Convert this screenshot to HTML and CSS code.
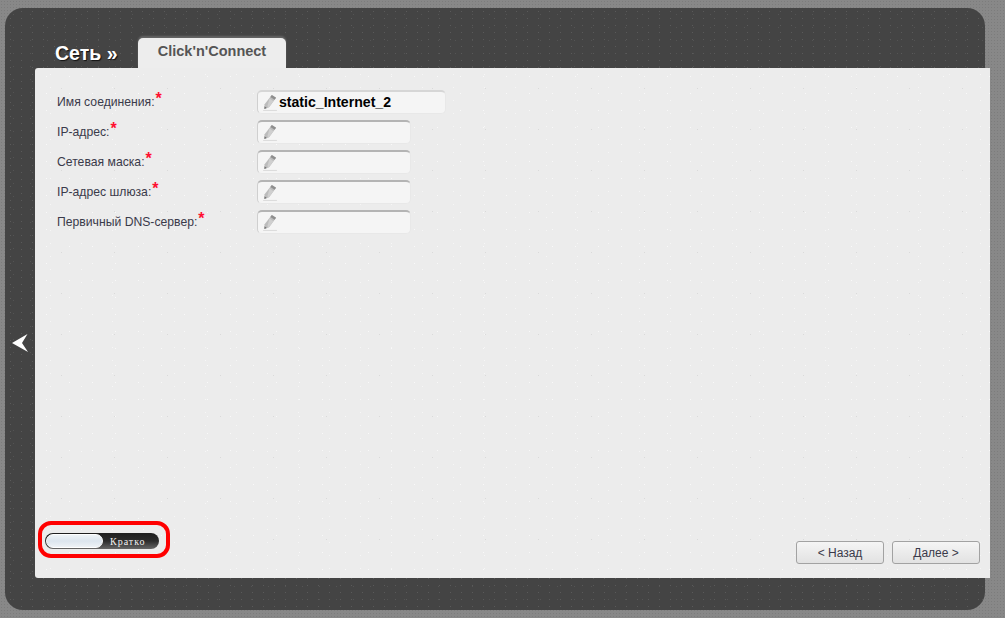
FILE: index.html
```html
<!DOCTYPE html>
<html lang="ru">
<head>
<meta charset="utf-8">
<title>Click'n'Connect</title>
<link rel="stylesheet" href="styles.css">
</head>
<body>
<svg class="defs" width="0" height="0" aria-hidden="true">
  <symbol id="pencil" viewBox="0 0 14 16">
    <path d="M9.2 1 13.2 3.6 6.6 12.4 2.2 14 2.4 9.6Z" fill="#bcbcbc"/>
    <path d="M9.2 1 13.2 3.6 11.8 5.5 7.8 2.9Z" fill="#8e8e8e"/>
    <path d="M7 4.2 10.8 6.8 6.2 12.8 5 11.6Z" fill="#cfcfcf"/>
    <path d="M2.2 14 2.3 11.6 4.4 13.2Z" fill="#6e6e6e"/>
    <path d="M1 15.5H14" stroke="#dcdcdc" stroke-width="1"/>
  </symbol>
</svg>
<div class="frame">
  <svg class="back" viewBox="0 0 17 18" width="17" height="18" aria-hidden="true">
    <path d="M0 9 15.5 0 10 9 16 18Z" fill="#fff"/>
  </svg>
  <header class="head">
    <h1 class="crumb">Сеть »</h1>
    <div class="tab">Click'n'Connect</div>
  </header>
  <main class="panel">
    <form class="form">
      <div class="row">
        <label class="label">Имя соединения:<span class="req">*</span></label>
        <div class="field field-wide">
          <svg class="pen"><use href="#pencil"/></svg>
          <span class="value">static_Internet_2</span>
        </div>
      </div>
      <div class="row">
        <label class="label">IP-адрес:<span class="req">*</span></label>
        <div class="field"><svg class="pen"><use href="#pencil"/></svg></div>
      </div>
      <div class="row">
        <label class="label">Сетевая маска:<span class="req">*</span></label>
        <div class="field"><svg class="pen"><use href="#pencil"/></svg></div>
      </div>
      <div class="row">
        <label class="label">IP-адрес шлюза:<span class="req">*</span></label>
        <div class="field"><svg class="pen"><use href="#pencil"/></svg></div>
      </div>
      <div class="row">
        <label class="label">Первичный DNS-сервер:<span class="req">*</span></label>
        <div class="field"><svg class="pen"><use href="#pencil"/></svg></div>
      </div>
    </form>
    <footer class="foot">
      <div class="highlight">
        <div class="toggle">
          <span class="knob"></span>
          <span class="toggle-text">Кратко</span>
        </div>
      </div>
      <div class="buttons">
        <button class="btn" type="button">&lt; Назад</button>
        <button class="btn" type="button">Далее &gt;</button>
      </div>
    </footer>
  </main>
</div>
</body>
</html>
```
FILE: styles.css
```css
* { box-sizing: border-box; }
html, body { margin: 0; height: 100%; }
body {
  background-color: #888;
  background-image: radial-gradient(#7c7c7c 0.5px, transparent 0.7px);
  background-size: 3px 3px;
  font-family: "Liberation Sans", Arial, sans-serif;
  font-size: 12px;
  color: #333;
  overflow: hidden;
  padding: 8px 20px 8px 5px;
}
.defs { position: absolute; }
.frame {
  position: relative;
  height: 602px;
  width: 980px;
  background-color: #444;
  background-image:
    radial-gradient(#5a5a5a 0.5px, transparent 0.8px),
    radial-gradient(#545454 0.5px, transparent 0.8px);
  background-size: 11px 7px, 17px 13px;
  border-radius: 18px;
  padding: 30px 0 32px 30px;
  display: flex;
  flex-direction: column;
}
.back { position: absolute; left: 7px; top: 326px; }
.head {
  display: flex;
  align-items: flex-end;
  height: 30px;
  padding-left: 20px;
}
.crumb {
  margin: 0 20px 0 0;
  width: 63px;
  font-size: 19.5px;
  line-height: 30px;
  font-weight: bold;
  color: #fff;
  white-space: nowrap;
  text-shadow: 1px 1px 1px #111;
}
.tab {
  width: 148px;
  height: 30px;
  background: #ededed;
  border-radius: 5px 5px 0 0;
  box-shadow: 0 -2px 2px #666;
  color: #555;
  font-size: 14.5px;
  font-weight: bold;
  text-align: center;
  line-height: 27px;
}
.panel {
  flex: 1;
  width: 955px;
  background-color: #ececec;
  background-image:
    radial-gradient(#f9f9f9 0.5px, transparent 0.8px),
    radial-gradient(#f6f6f6 0.5px, transparent 0.8px),
    radial-gradient(#dadada 0.5px, transparent 0.8px);
  background-size: 23px 17px, 31px 13px, 53px 41px;
  border-radius: 3px 0 0 3px;
  padding: 22px 10px 14px 22px;
  display: flex;
  flex-direction: column;
  justify-content: space-between;
}
.form { display: flex; flex-direction: column; gap: 6px; }
.row { display: flex; height: 24px; }
.label { width: 200px; font-size: 12.2px; line-height: 24px; color: #3a3a4a; white-space: nowrap; }
.req {
  color: #ff1030;
  font-size: 16px;
  font-weight: bold;
  line-height: 12px;
  position: relative;
  top: -2px;
  left: 1px;
}
.field {
  width: 154px;
  height: 24px;
  background: #f5f5f5;
  border: 1px solid #e8e8e8;
  border-top: 2px solid #b4b4b4;
  border-left-color: #cfcfcf;
  border-radius: 5px;
  display: flex;
  align-items: center;
  gap: 2px;
  padding-left: 4px;
}
.field-wide { width: 189px; border-top-color: #d6d6d6; }
.pen { width: 15px; height: 17px; flex: none; }
.value { font-size: 14.1px; font-weight: bold; color: #000; line-height: 18px; padding-bottom: 2px; }
.foot { display: flex; justify-content: space-between; align-items: flex-end; }
.highlight {
  width: 132px;
  height: 37px;
  margin: 0 0 6px -19px;
  border: 4px solid #f00;
  border-radius: 13px;
  padding: 8px 0 0 3px;
}
.toggle {
  width: 114px;
  height: 16px;
  border-radius: 8px;
  background: linear-gradient(#1e1e1e, #2c2c2c 50%, #666);
  display: flex;
  align-items: center;
  padding-left: 1px;
}
.knob {
  width: 57px;
  height: 14px;
  border-radius: 7px;
  background: linear-gradient(#eef3f7, #dce5ee 50%, #eef2f6);
  border: 1px solid #fff;
}
.toggle-text {
  margin-left: 7px;
  font-family: "Liberation Serif", serif;
  font-size: 10px;
  letter-spacing: 1px;
  color: #f2f2f2;
}
.buttons { display: flex; gap: 8px; }
.btn {
  width: 88px;
  height: 23px;
  padding: 0;
  background: linear-gradient(#f5f5f5, #ececec 45%, #e2e2e2);
  border: 1px solid #a2a2a2;
  border-radius: 3px;
  font-family: inherit;
  font-size: 12px;
  color: #3a3a4a;
}
```
